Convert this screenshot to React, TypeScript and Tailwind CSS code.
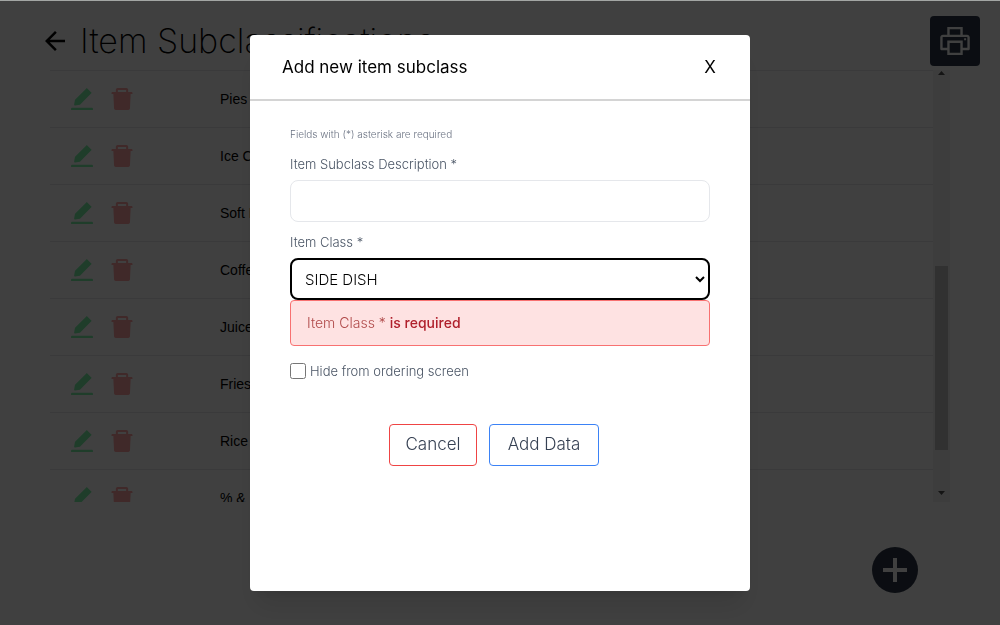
import { AiFillDelete, AiFillEdit, AiOutlinePrinter } from "react-icons/ai";
import { MdArrowBack } from "react-icons/md";

const subclasses = [
  "Pies",
  "Ice Cream",
  "Soft Drinks",
  "Coffee",
  "Juice",
  "Fries",
  "Rice",
  "% &",
];

function ScrollTrack() {
  return (
    <div className="flex w-[17px] shrink-0 flex-col items-center bg-[#f4f4f4]" aria-hidden="true">
      <svg className="h-[17px] w-[17px] shrink-0" viewBox="0 0 17 17">
        <path d="M5 5h7L8.500 1z" fill="#505050" />
      </svg>
      <div className="h-[179px] shrink-0" />
      <div className="h-[184px] w-[13px] shrink-0 bg-[#c1c1c1]" />
      <div className="grow" />
      <svg className="h-[17px] w-[17px] shrink-0" viewBox="0 0 17 17">
        <path d="M5 6h7l-3.500 4z" fill="#505050" />
      </svg>
    </div>
  );
}

function SubclassPage() {
  return (
    <main className="flex min-h-screen flex-col border-t border-[#a3a6a4] bg-white">
      <header className="flex items-start justify-between pt-[15px] pr-5 pl-10">
        <div className="flex items-center gap-[10px] pt-1">
          <button type="button" aria-label="Back">
            <MdArrowBack size={30} />
          </button>
          <h1 className="text-[34px] leading-[42px] font-extralight text-black">
            Item Subclassifications
          </h1>
        </div>
        <button
          type="button"
          aria-label="Print"
          className="flex h-[50px] w-[50px] items-center justify-center rounded bg-[#2d3748] text-white"
        >
          <AiOutlinePrinter size={36} />
        </button>
      </header>
      <div className="mx-[50px] mt-1 flex h-[432px] overflow-hidden">
        <div className="grow overflow-hidden">
          <table className="w-full border-collapse">
            <tbody>
              {subclasses.map((name) => (
                <tr key={name} className="h-[57px] border-t border-gray-200">
                  <td className="w-[170px] pl-[18px]">
                    <div className="flex items-center gap-3">
                      <button type="button" aria-label="Edit" className="text-green-300">
                        <AiFillEdit size={28} />
                      </button>
                      <button type="button" aria-label="Delete" className="text-red-300">
                        <AiFillDelete size={28} />
                      </button>
                    </div>
                  </td>
                  <td className="font-['Liberation_Sans',sans-serif] text-sm text-black">{name}</td>
                </tr>
              ))}
            </tbody>
          </table>
        </div>
        <ScrollTrack />
      </div>
      <div className="mt-[45px] flex justify-end pr-[82px]">
        <button
          type="button"
          aria-label="Add subclass"
          className="flex h-[46px] w-[46px] items-center justify-center rounded-full bg-[#2d3748]"
        >
          <svg width="24" height="24" viewBox="0 0 24 24" fill="#fff">
            <path d="M10 0h4v10h10v4H14v10h-4V14H0v-4h10z" />
          </svg>
        </button>
      </div>
    </main>
  );
}

function AddSubclassDialog() {
  return (
    <div className="fixed inset-x-0 top-px bottom-0 flex items-center justify-center bg-black/75">
      <section
        role="dialog"
        aria-labelledby="dialog-title"
        className="min-h-[556px] w-[500px] rounded bg-white shadow-xl"
      >
        <div className="flex h-[66px] items-center justify-between border-b-2 border-[#d4d4d4] px-8">
          <h2 id="dialog-title" className="text-[17px] leading-6 text-black">
            Add new item subclass
          </h2>
          <button type="button" className="w-4 text-center text-[17px] leading-6 text-black">
            X
          </button>
        </div>
        <form className="flex flex-col px-10 pt-[25px] font-light text-gray-600">
          <p className="text-[10px] leading-4 text-gray-500">
            Fields with (*) asterisk are required
          </p>
          <label htmlFor="description" className="mt-3 text-[13px] leading-5">
            Item Subclass Description *
          </label>
          <input
            id="description"
            type="text"
            className="mt-[6px] h-[42px] rounded-lg border border-gray-200 px-3 text-sm outline-none"
          />
          <label htmlFor="item-class" className="mt-[10px] text-[13px] leading-5">
            Item Class *
          </label>
          <select
            id="item-class"
            className="mt-[6px] h-[42px] rounded-lg border-2 border-black bg-white pl-[9px] text-[15px] text-black outline-none"
          >
            <option>SIDE DISH</option>
          </select>
          <p
            role="alert"
            className="h-[46px] rounded border border-[#f87171] bg-[#fee2e2] px-4 text-sm leading-[44px] text-[#b04a4a]"
          >
            Item Class * <span className="font-medium text-[#b0202c]">is required</span>
          </p>
          <div className="mt-[15px] flex items-center gap-1">
            <input id="hide" type="checkbox" className="h-4 w-4" />
            <label htmlFor="hide" className="text-[13px] leading-5">
              Hide from ordering screen
            </label>
          </div>
          <div className="mt-[43px] flex justify-center pr-3 text-[17px] text-gray-700">
            <button type="button" className="mr-3 h-[42px] w-[88px] rounded border border-[#ef4444]">
              Cancel
            </button>
            <button type="submit" className="h-[42px] w-[110px] rounded border border-[#3b82f6]">
              Add Data
            </button>
          </div>
        </form>
      </section>
    </div>
  );
}

export default function App() {
  return (
    <div className="font-[Inter,sans-serif]">
      <SubclassPage />
      <AddSubclassDialog />
    </div>
  );
}
